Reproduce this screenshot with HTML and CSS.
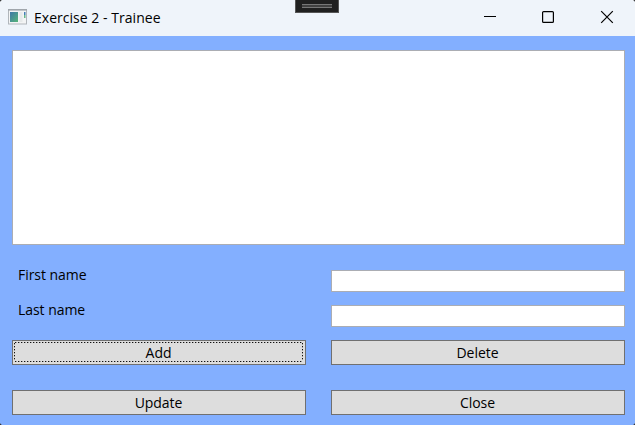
FILE: index.html
```html
<!DOCTYPE html>
<html lang="en">
<head>
<meta charset="utf-8">
<title>Exercise 2 - Trainee</title>
<link rel="stylesheet" href="styles.css">
</head>
<body>
<div class="window">
  <header class="titlebar">
    <svg class="app-icon" width="19" height="16" viewBox="0 0 19 16">
      <defs><linearGradient id="pane" x1="0" y1="0" x2="1" y2="1"><stop offset="0" stop-color="#3f78a8"/><stop offset="1" stop-color="#56b578"/></linearGradient></defs>
      <rect x=".5" y=".5" width="18" height="14.5" fill="#f3f4f5" stroke="#b1b6bb"/>
      <path d="M0 .8H19" stroke="#a0a6ac" stroke-width="1.6"/>
      <rect x="2" y="3" width="8" height="10" fill="url(#pane)"/>
      <rect x="11.5" y="3" width="3" height="10" fill="#e6e9ea"/>
      <path d="M16 3h1.5v3H16z" fill="#437eb5"/><path d="M16 6h1.5v3H16z" fill="#65b78b"/>
    </svg>
    <h1 class="title">Exercise 2 - Trainee</h1>
    <svg class="controls" width="130" height="14" viewBox="0 0 130 14" fill="none" stroke="#000" stroke-width="1.2">
      <path d="M0 6.5H12" stroke-width="1"/>
      <rect x="58.6" y="1.6" width="10.8" height="10.8" rx="1"/>
      <path d="M117.2 1.2L128.8 12.8M128.8 1.2L117.2 12.8"/>
    </svg>
    <div class="grip"><span class="grip-lines"></span></div>
  </header>
  <main class="form">
    <div class="list"></div>
    <label class="label" for="first">First name</label>
    <input class="field" id="first" type="text">
    <label class="label" for="last">Last name</label>
    <input class="field" id="last" type="text">
    <button class="button focused">Add</button>
    <button class="button">Delete</button>
    <button class="button">Update</button>
    <button class="button">Close</button>
  </main>
  <i class="corner top-left"></i><i class="corner top-right"></i>
  <i class="corner bottom-left"></i><i class="corner bottom-right"></i>
</div>
</body>
</html>
```
FILE: styles.css
```css
* { box-sizing: border-box; }
body { margin: 0; font-family: "Open Sans", "Noto Sans", sans-serif; font-size: 14px; color: #000; }
.window { position: relative; width: 635px; height: 425px; overflow: hidden; background: #83afff; }
.titlebar { display: flex; height: 36px; padding: 9px 21px 0 8px; background: #eff4fa; }
.title { margin: 0 0 0 7px; font-size: 14px; font-weight: 400; line-height: 18px; letter-spacing: 0.03px; white-space: nowrap; }
.controls { margin: 1px 0 0 auto; }
.grip { position: absolute; top: 0; left: 295px; width: 44px; height: 13px; padding: 4px 6px; background: #202020; border: solid #555; border-width: 0 1px 1px; }
.grip-lines { display: block; height: 4px; background: #404040; border: solid #777; border-width: 1px 0; }
.form { display: grid; grid-template-columns: 294px 294px; grid-template-rows: 220px 35px 35px 50px 25px; column-gap: 25px; padding: 14px 10px 0 12px; }
.list { grid-column: 1 / 3; width: 613px; height: 195px; background: #fff; border: 1px solid #abadb3; }
.label { margin: -4px 0 0 6px; line-height: 18px; letter-spacing: -0.05px; white-space: nowrap; }
.field { width: 294px; height: 22px; margin: 0; padding: 2px 4px; font: inherit; background: #fff; border: 1px solid #abadb3; outline: 0; }
.button { display: flex; align-items: center; justify-content: center; width: 294px; height: 25px; margin: 0; padding: 0 1px 0 0; font: inherit; line-height: 18px; color: #000; background: #ddd; border: 1px solid #707070; border-radius: 0; outline: 0; letter-spacing: -0.05px; }
.focused { background:
  repeating-linear-gradient(90deg, #111 0 1px, #999 1px 2px, transparent 2px 3px) 2px 1px / 288px 1px no-repeat,
  repeating-linear-gradient(90deg, #111 0 1px, #999 1px 2px, transparent 2px 3px) 2px 20px / 288px 1px no-repeat,
  repeating-linear-gradient(#111 0 1px, #999 1px 2px, transparent 2px 3px) 1px 2px / 1px 18px no-repeat,
  repeating-linear-gradient(#111 0 1px, #999 1px 2px, transparent 2px 3px) 289px 2px / 1px 18px no-repeat, #ddd; }
.corner { position: absolute; width: 4px; height: 4px; }
.top-left { top: 0; left: 0; background: radial-gradient(circle at 100% 100%, transparent 4px, #333 5px); }
.top-right { top: 0; right: 0; background: radial-gradient(circle at 0 100%, transparent 4px, #333 5px); }
.bottom-left { bottom: 0; left: 0; background: radial-gradient(circle at 100% 0, transparent 4px, #333 5px); }
.bottom-right { right: 0; bottom: 0; background: radial-gradient(circle at 0 0, transparent 4px, #333 5px); }
```
